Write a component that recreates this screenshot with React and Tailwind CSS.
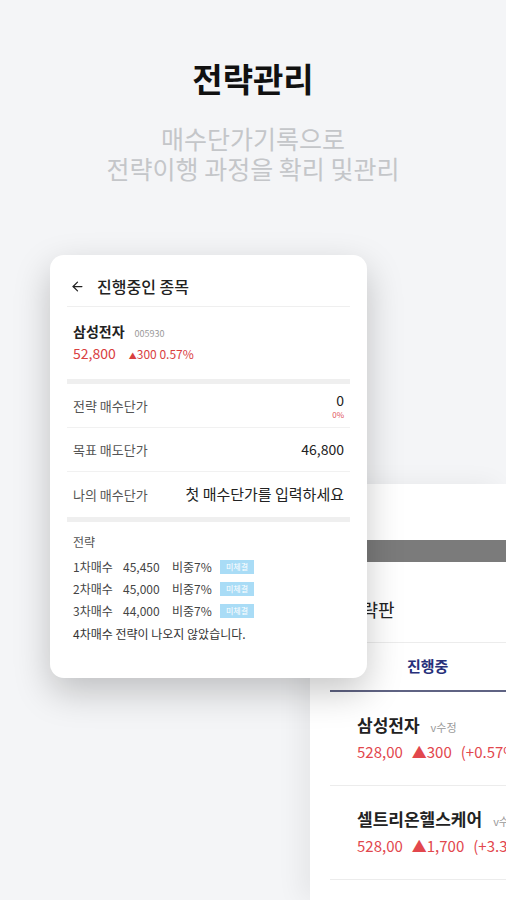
import React from 'react';
import { ArrowLeft } from 'lucide-react';

const font = { fontFamily: '"Noto Sans CJK KR", "Noto Sans", sans-serif' };

const strategies = [
    { step: '1차매수', price: '45,450', weight: '비중7%' },
    { step: '2차매수', price: '45,000', weight: '비중7%' },
    { step: '3차매수', price: '44,000', weight: '비중7%' },
];

const holdings = [
    { name: '삼성전자', price: '528,00', diff: '▲300', rate: '(+0.57%)', edit: true },
    { name: '셀트리온헬스케어', price: '528,00', diff: '▲1,700', rate: '(+3.35%)', edit: true },
];

const App = () => {
    return (
        <div
            className="relative w-[506px] h-[900px] overflow-hidden bg-[#f4f5f7] text-[#222]"
            style={font}
        >
            {/* Heading */}
            <div className="relative z-20 flex flex-col items-center pt-[56px]">
                <h1 className="text-[33px] leading-[44px] font-bold text-[#111]">전략관리</h1>
                <div className="mt-[23px] flex flex-col items-center text-[25px] leading-[30px] text-[#c4c6c9]">
                    <span>매수단가기록으로</span>
                    <span>전략이행 과정을 확리 및관리</span>
                </div>
            </div>

            {/* Back panel: strategy board */}
            <div className="absolute left-[310px] top-[484px] w-[196px] h-[416px] bg-white overflow-hidden shadow-[-10px_0_24px_rgba(0,0,0,0.06)]">
                <div className="h-[56px]" />
                <div className="h-[22px] bg-[#7b7b7b]" />
                <div className="ml-[20px] h-[81px] flex items-center pl-[15px] pt-[14px] border-b border-[#ececec]">
                    <span className="text-[18px] whitespace-nowrap text-[#222]">전략판</span>
                </div>
                <div className="ml-[20px] h-[49px] flex items-center pl-[77px] border-b-2 border-[#5f6383]">
                    <span className="text-[15px] font-bold text-[#27307a]">진행중</span>
                </div>
                {holdings.map((h) => (
                    <div
                        key={h.name}
                        className="ml-[20px] h-[94px] pl-[27px] pt-[20px] border-b border-[#ececec] whitespace-nowrap"
                    >
                        <div className="flex items-baseline gap-[11px]">
                            <span className="text-[17px] leading-[26px] font-bold text-[#222]">{h.name}</span>
                            {h.edit && <span className="text-[11px] text-[#999]">v수정</span>}
                        </div>
                        <div className="mt-[2px] flex items-center gap-[9px] text-[15px] leading-[24px] text-[#e2474d]">
                            <span>{h.price}</span>
                            <span>{h.diff}</span>
                            <span>{h.rate}</span>
                        </div>
                    </div>
                ))}
            </div>

            {/* Front card: current holding */}
            <div className="relative z-10 mt-[72px] ml-[50px] w-[317px] h-[423px] bg-white rounded-[14px] shadow-[0_14px_36px_rgba(0,0,0,0.22)] px-[17px]">
                {/* Header */}
                <div className="flex items-center gap-[12px] pt-[20px] pb-[9px] px-[3px] border-b border-[#efefef]">
                    <ArrowLeft size={15} strokeWidth={2} className="text-[#222]" />
                    <span className="text-[16px] leading-[22px] font-medium text-[#222]">진행중인 종목</span>
                </div>

                {/* Stock */}
                <div className="h-[72px] px-[6px] pt-[14px]">
                    <div className="flex items-baseline gap-[10px]">
                        <span className="text-[14px] leading-[20px] font-bold text-[#222]">삼성전자</span>
                        <span className="text-[9px] text-[#999]">005930</span>
                    </div>
                    <div className="mt-[2px] flex items-baseline gap-[13px] text-[#d9403f]">
                        <span className="text-[14px] leading-[20px]">52,800</span>
                        <span className="text-[12px]">
                            <span className="text-[8px]">▲</span>300 0.57%
                        </span>
                    </div>
                </div>
                <div className="h-[5px] bg-[#efefef]" />

                {/* Prices */}
                <div className="h-[44px] px-[6px] flex items-center justify-between border-b border-[#f1f1f1]">
                    <span className="text-[13px] text-[#555]">전략 매수단가</span>
                    <div className="flex flex-col items-end leading-none">
                        <span className="text-[14px] text-[#222]">0</span>
                        <span className="mt-[4px] text-[8px] text-[#e0525a]">0%</span>
                    </div>
                </div>
                <div className="h-[44px] px-[6px] flex items-center justify-between border-b border-[#f1f1f1]">
                    <span className="text-[13px] text-[#555]">목표 매도단가</span>
                    <span className="text-[14px] text-[#222]">46,800</span>
                </div>
                <div className="h-[45px] px-[6px] flex items-center justify-between">
                    <span className="text-[13px] text-[#555]">나의 매수단가</span>
                    <span className="text-[15px] text-[#222]">첫 매수단가를 입력하세요</span>
                </div>
                <div className="h-[5px] bg-[#efefef]" />

                {/* Strategy */}
                <div className="px-[6px] pt-[12px]">
                    <div className="text-[12px] leading-[16px] text-[#555]">전략</div>
                    <div className="mt-[6px] flex flex-col">
                        {strategies.map((s) => (
                            <div key={s.step} className="h-[22px] flex items-center text-[12px] text-[#444]">
                                <span className="w-[50px]">{s.step}</span>
                                <span className="w-[49px]">{s.price}</span>
                                <span className="w-[48px]">{s.weight}</span>
                                <span className="px-[6px] h-[14px] leading-[14px] bg-[#a9dcf6] text-white text-[8px]">
                                    미체결
                                </span>
                            </div>
                        ))}
                        <div className="h-[23px] flex items-center text-[12px] text-[#333]">
                            4차매수 전략이 나오지 않았습니다.
                        </div>
                    </div>
                </div>
            </div>
        </div>
    );
};

export default App;
